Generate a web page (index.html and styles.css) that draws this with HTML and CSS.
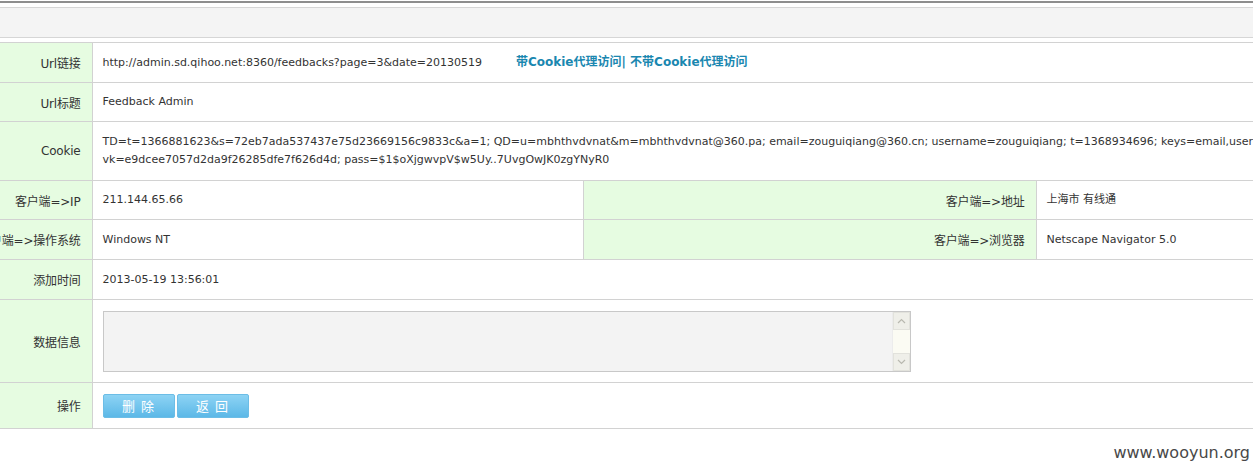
FILE: index.html
```html
<!DOCTYPE html>
<html>
<head>
<meta charset="utf-8">
<link rel="stylesheet" href="styles.css">
</head>
<body>
<div class="topline"></div>
<div class="toolbar"></div>
<table class="detail">
  <colgroup>
    <col class="c1"><col class="c2"><col class="c3"><col class="c4">
  </colgroup>
  <tr class="h40">
    <td class="lab"><div class="lab-in">Url链接</div></td>
    <td class="val" colspan="3">http://admin.sd.qihoo.net:8360/feedbacks?page=3&amp;date=20130519<span class="links"><a href="#">带Cookie代理访问</a>| <a href="#">不带Cookie代理访问</a></span></td>
  </tr>
  <tr class="h39">
    <td class="lab"><div class="lab-in">Url标题</div></td>
    <td class="val" colspan="3">Feedback Admin</td>
  </tr>
  <tr class="h59">
    <td class="lab"><div class="lab-in">Cookie</div></td>
    <td class="val cookie" colspan="3">TD=t=1366881623&amp;s=72eb7ada537437e75d23669156c9833c&amp;a=1; QD=u=mbhthvdvnat&amp;m=mbhthvdvnat@360.pa; email=zouguiqiang@360.cn; username=zouguiqiang; t=1368934696; keys=email,username,t,vk;<br>vk=e9dcee7057d2da9f26285dfe7f626d4d; pass=$1$oXjgwvpV$w5Uy..7UvgOwJK0zgYNyR0</td>
  </tr>
  <tr class="h39">
    <td class="lab"><div class="lab-in">客户端=&gt;IP</div></td>
    <td class="val">211.144.65.66</td>
    <td class="lab"><div class="lab-in">客户端=&gt;地址</div></td>
    <td class="val">上海市 有线通</td>
  </tr>
  <tr class="h40">
    <td class="lab"><div class="lab-in">客户端=&gt;操作系统</div></td>
    <td class="val">Windows NT</td>
    <td class="lab"><div class="lab-in">客户端=&gt;浏览器</div></td>
    <td class="val">Netscape Navigator 5.0</td>
  </tr>
  <tr class="h40">
    <td class="lab"><div class="lab-in">添加时间</div></td>
    <td class="val" colspan="3">2013-05-19 13:56:01</td>
  </tr>
  <tr class="h83">
    <td class="lab"><div class="lab-in">数据信息</div></td>
    <td class="val" colspan="3">
      <div class="textbox">
        <div class="textbox-area"></div>
        <div class="sbar">
          <div class="sbtn"><svg width="9" height="6" viewBox="0 0 9 6"><path d="M1 5 L4.5 1.5 L8 5" fill="none" stroke="#b9b9b0" stroke-width="1.2"/></svg></div>
          <div class="strack"></div>
          <div class="sbtn"><svg width="9" height="6" viewBox="0 0 9 6"><path d="M1 1 L4.5 4.5 L8 1" fill="none" stroke="#b9b9b0" stroke-width="1.2"/></svg></div>
        </div>
      </div>
    </td>
  </tr>
  <tr class="h46">
    <td class="lab"><div class="lab-in">操作</div></td>
    <td class="val" colspan="3">
      <div class="btns">
        <button class="btn">删 除</button>
        <button class="btn">返 回</button>
      </div>
    </td>
  </tr>
</table>
<div class="watermark">www.wooyun.org</div>
</body>
</html>
```
FILE: styles.css
```css
html, body {
  margin: 0;
  padding: 0;
  overflow: hidden;
  background: #fff;
}
body {
  font-family: "DejaVu Sans", "Noto Sans CJK SC", sans-serif;
  font-size: 11px;
  color: #333;
  width: 1253px;
  height: 463px;
  position: relative;
}
.topline {
  margin-top: 1px;
  height: 2px;
  background: #8e8e8e;
}
.toolbar {
  margin-top: 4px;
  height: 29px;
  background: #f4f4f4;
  border-top: 1px solid #d6d6d6;
  border-bottom: 1px solid #d6d6d6;
}
.detail {
  margin-top: 4px;
  width: 1420px;
  table-layout: fixed;
  border-collapse: collapse;
}
.c1 { width: 92px; }
.c2 { width: 491px; }
.c3 { width: 453px; }
.c4 { width: 384px; }
.detail td {
  border-top: 1px solid #d2d2d2;
  border-bottom: 1px solid #d2d2d2;
  padding: 0;
  vertical-align: middle;
}
.detail td + td {
  border-left: 1px solid #d2d2d2;
}
.h39 td { height: 38px; }
.h40 td { height: 39px; }
.h46 td { height: 45px; }
.h59 td { height: 58px; }
.h83 td { height: 82px; }
.lab {
  background: #e6fce1;
  font-size: 12px;
}
.lab-in {
  display: flex;
  justify-content: flex-end;
  white-space: nowrap;
  padding-right: 11px;
  letter-spacing: -0.2px;
}
.val {
  padding-left: 10px !important;
  white-space: nowrap;
  line-height: 14px;
}
.cookie {
  line-height: 18px;
}
.links {
  margin-left: 34px;
  font-size: 12px;
  font-weight: bold;
  color: #1a87b0;
  line-height: 14px;
}
.links a {
  color: #1a87b0;
  text-decoration: none;
}
.textbox {
  display: flex;
  width: 806px;
  height: 59px;
  border: 1px solid #c8c8c8;
  background: #f3f3f3;
}
.textbox-area {
  flex: 1;
}
.sbar {
  width: 17px;
  display: flex;
  flex-direction: column;
  background: #fbfbf3;
  border-left: 1px solid #ececec;
}
.sbtn {
  height: 16px;
  display: flex;
  align-items: center;
  justify-content: center;
  background: #efefe9;
  border: 1px solid #e2e2dc;
}
.strack {
  flex: 1;
}
.btns {
  display: flex;
  gap: 2px;
}
.btn {
  width: 72px;
  height: 24px;
  padding: 0;
  border: 1px solid #6cbde6;
  border-radius: 2px;
  background: linear-gradient(#8dd3f4, #5cb8e7);
  color: #fff;
  font-family: "DejaVu Sans", "Noto Sans CJK SC", sans-serif;
  font-size: 13px;
  letter-spacing: 1px;
}
.watermark {
  position: absolute;
  right: 3px;
  top: 443px;
  font-family: "DejaVu Sans", Verdana, sans-serif;
  font-size: 16px;
  color: #484848;
}
```
